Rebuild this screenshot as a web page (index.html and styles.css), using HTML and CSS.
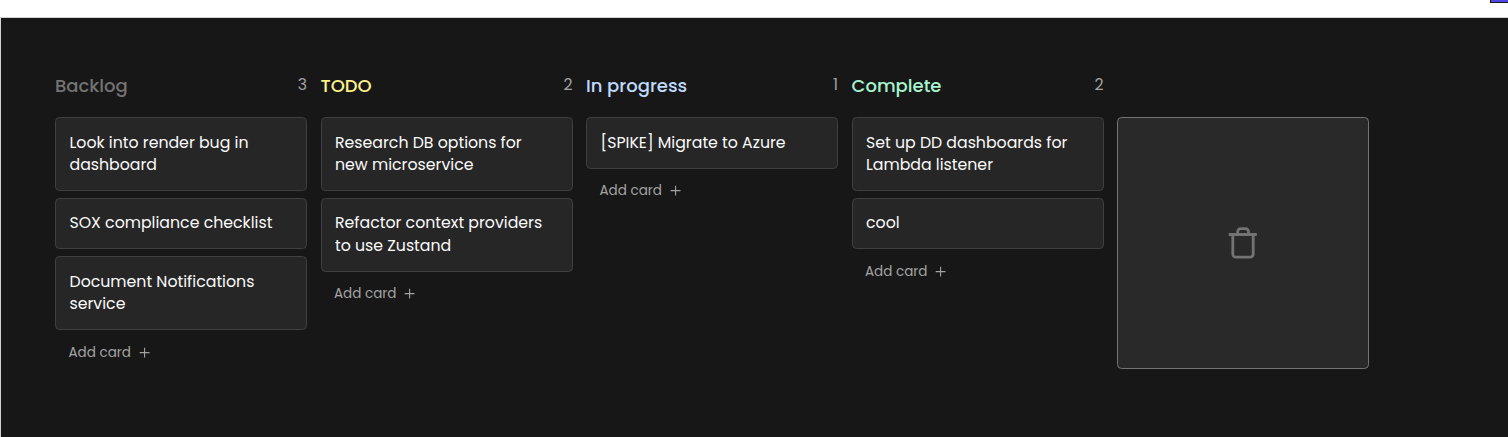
FILE: index.html
```html
<!DOCTYPE html>
<html lang="en">
<head>
<meta charset="utf-8">
<title>Kanban</title>
<link rel="stylesheet" href="styles.css">
</head>
<body>
<div class="corner"></div>
<main class="board">
  <section class="column">
    <header class="head"><h3 class="title backlog">Backlog</h3><span class="count">3</span></header>
    <div class="cards">
      <p class="card">Look into render bug in dashboard</p>
      <p class="card">SOX compliance checklist</p>
      <p class="card">Document Notifications service</p>
    </div>
    <button class="add"><span>Add card</span><svg class="plus" viewBox="0 0 14 14"><path d="M6.6 1.7v9.8M1.7 6.6h9.8"/></svg></button>
  </section>
  <section class="column">
    <header class="head"><h3 class="title todo">TODO</h3><span class="count">2</span></header>
    <div class="cards">
      <p class="card">Research DB options for new microservice</p>
      <p class="card">Refactor context providers to use Zustand</p>
    </div>
    <button class="add"><span>Add card</span><svg class="plus" viewBox="0 0 14 14"><path d="M6.6 1.7v9.8M1.7 6.6h9.8"/></svg></button>
  </section>
  <section class="column">
    <header class="head"><h3 class="title progress">In progress</h3><span class="count">1</span></header>
    <div class="cards">
      <p class="card">[SPIKE] Migrate to Azure</p>
    </div>
    <button class="add"><span>Add card</span><svg class="plus" viewBox="0 0 14 14"><path d="M6.6 1.7v9.8M1.7 6.6h9.8"/></svg></button>
  </section>
  <section class="column">
    <header class="head"><h3 class="title complete">Complete</h3><span class="count">2</span></header>
    <div class="cards">
      <p class="card">Set up DD dashboards for Lambda listener</p>
      <p class="card">cool</p>
    </div>
    <button class="add"><span>Add card</span><svg class="plus" viewBox="0 0 14 14"><path d="M6.6 1.7v9.8M1.7 6.6h9.8"/></svg></button>
  </section>
  <div class="trash">
    <svg class="bin" viewBox="0 0 34 34"><path d="M2.8 8.5h28M6.8 8.5v19.7a3 3 0 0 0 3 3h14.4a3 3 0 0 0 3-3V8.5M11.7 8.5V5.6a3 3 0 0 1 3-3h4.8a3 3 0 0 1 3 3v2.9"/></svg>
  </div>
</main>
</body>
</html>
```
FILE: styles.css
```css
* { box-sizing: border-box; }
body {
  margin: 0;
  padding-top: 17px;
  height: 437px;
  overflow: hidden;
  background: #fff;
  font-family: Poppins, Inter, sans-serif;
}
.corner {
  position: absolute;
  top: 0;
  right: 0;
  width: 18px;
  height: 3px;
  background: #4f46e5;
  border-left: 1px solid #171717;
  border-bottom: 1px solid #171717;
}
.board {
  display: flex;
  align-items: flex-start;
  gap: 13.5px;
  height: 420px;
  padding: 54px 0 0 54px;
  background: #171717;
  border-top: 1px solid #d4d4d4;
  border-left: 1px solid #d4d4d4;
}
.column { flex: none; width: 252px; }
.head {
  display: flex;
  align-items: center;
  justify-content: space-between;
  height: 27px;
  margin-bottom: 18px;
}
.title { margin: 0; font-size: 18px; line-height: 27px; font-weight: 500; }
.backlog { color: #737373; }
.todo { color: #fef08a; }
.progress { color: #bfdbfe; }
.complete { color: #a7f3d0; }
.count { font-size: 15.75px; line-height: 22.5px; color: #a3a3a3; }
.cards { display: flex; flex-direction: column; gap: 6.75px; }
.card {
  margin: 0;
  padding: 13.5px;
  border: 1px solid #404040;
  border-radius: 4.5px;
  background: #262626;
  color: #fafafa;
  font-size: 15.75px;
  line-height: 22.5px;
}
.add {
  display: flex;
  align-items: center;
  gap: 6.75px;
  margin: 0;
  padding: 13.5px 13.5px 0;
  border: 0;
  background: none;
  color: #a3a3a3;
  font: inherit;
  font-size: 13.5px;
  line-height: 18px;
}
.plus { width: 14px; height: 14px; fill: none; stroke: #a3a3a3; stroke-width: 1.1; }
.trash {
  flex: none;
  display: grid;
  place-items: center;
  width: 252px;
  height: 252px;
  margin-top: 45px;
  border: 1px solid #737373;
  border-radius: 4.5px;
  background: #292929;
}
.bin { width: 34px; height: 34px; fill: none; stroke: #737373; stroke-width: 2.8; }
```
